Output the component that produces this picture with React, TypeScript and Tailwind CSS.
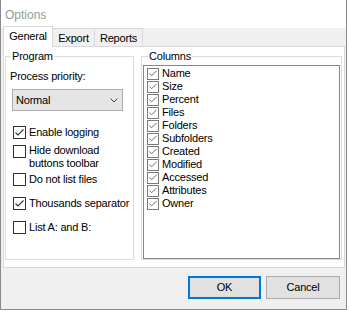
import { ReactNode } from 'react';

const columns = [
  'Name',
  'Size',
  'Percent',
  'Files',
  'Folders',
  'Subfolders',
  'Created',
  'Modified',
  'Accessed',
  'Attributes',
  'Owner',
];

function Tick({ color }: { color: string }) {
  return (
    <svg width="11" height="11" viewBox="0 0 11 11" className="block">
      <polyline points="1.5,5.5 4,8 9.5,2.5" fill="none" stroke={color} strokeWidth="1.1" />
    </svg>
  );
}

// checkbox of the dialog itself
function Check({ checked, children, top = 0 }: { checked: boolean; children: ReactNode; top?: number }) {
  return (
    <div className="flex items-start pl-[7px]" style={{ marginTop: top }}>
      <div className="mt-[1px] flex h-[13px] w-[13px] shrink-0 items-center justify-center border border-[#333333] bg-white">
        {checked && <Tick color="#333333" />}
      </div>
      <span className="ml-[3px] leading-[14px]">{children}</span>
    </div>
  );
}

export default function App() {
  return (
    <div
      className="h-[311px] w-[349px] overflow-hidden bg-white text-[11px] tracking-[-0.2px] text-black"
      style={{ fontFamily: '"Liberation Sans", Arial, sans-serif' }}
    >
      <div className="flex h-[310px] w-[347px] flex-col border-x border-b border-[#8a8a8a] bg-[#f0f0f0]">
        {/* Title bar */}
        <div className="flex h-[28px] shrink-0 items-start bg-white pl-[4px] pt-[6px] text-[12px] tracking-normal text-[#999999]">
          Options
        </div>

        {/* Tabs */}
        <div className="flex h-[18px] shrink-0 items-end pl-[2px]">
          <div className="relative z-10 mb-[-1px] flex h-[21px] w-[50px] items-center justify-center border border-b-0 border-[#d9d9d9] bg-white pb-[1px]">
            General
          </div>
          <div className="flex h-[18px] w-[42px] items-center justify-center border border-b-0 border-l-0 border-[#d9d9d9] pt-[1px]">
            Export
          </div>
          <div className="flex h-[18px] w-[48px] items-center justify-center border border-b-0 border-l-0 border-[#d9d9d9] pt-[1px]">
            Reports
          </div>
        </div>

        {/* Tab page */}
        <div className="ml-[2px] flex h-[222px] w-[342px] shrink-0 items-start border border-[#d9d9d9] bg-white pt-[2px]">
          <fieldset className="ml-[1px] h-[211px] w-[129px] border border-[#dcdcdc]">
            <legend className="ml-[5px] px-[1px] leading-[14px]">Program</legend>
            <div className="mt-[6px] pl-[4px] leading-[14px]">Process priority:</div>
            <div className="ml-[6px] mt-[6px] flex h-[22px] w-[111px] items-center justify-between border border-[#adadad] bg-[#e5e5e5] pl-[3px] pr-[4px]">
              <span>Normal</span>
              <svg width="8" height="5" viewBox="0 0 8 5" className="block">
                <polyline points="0.5,0.5 4,4 7.5,0.5" fill="none" stroke="#444444" strokeWidth="1" />
              </svg>
            </div>
            <Check checked top={14}>Enable logging</Check>
            <div className="flex items-start pl-[7px] pt-[5px]">
              <div className="mt-[1px] h-[13px] w-[13px] shrink-0 border border-[#333333] bg-white" />
              <span className="ml-[3px] leading-[13px]">
                Hide download
                <br />
                buttons toolbar
              </span>
            </div>
            <Check checked={false} top={2}>Do not list files</Check>
            <Check checked top={10}>Thousands separator</Check>
            <Check checked={false} top={10}>List A: and B:</Check>
          </fieldset>

          <fieldset className="ml-[7px] h-[211px] w-[201px] border border-[#dcdcdc]">
            <legend className="ml-[6px] px-[1px] leading-[14px]">Columns</legend>
            <div className="ml-[1px] mt-[2px] h-[194px] w-[197px] border border-[#828790] bg-white pl-[3px] pt-[1px]">
              {columns.map((c) => (
                <div key={c} className="flex h-[13px] items-center">
                  <div className="flex h-[12px] w-[12px] shrink-0 items-center justify-center border border-[#7a7a7a] bg-white">
                    <Tick color="#6a6a6a" />
                  </div>
                  <span className="ml-[3px] leading-[13px]">{c}</span>
                </div>
              ))}
            </div>
          </fieldset>
        </div>

        {/* Buttons */}
        <div className="flex flex-1 items-start justify-end pr-[6px] pt-[8px]">
          <button className="flex h-[23px] w-[73px] items-center justify-center border-2 border-[#0078d7] bg-[#e1e1e1]">
            OK
          </button>
          <button className="ml-[5px] flex h-[23px] w-[74px] items-center justify-center border border-[#adadad] bg-[#e1e1e1]">
            Cancel
          </button>
        </div>
      </div>
    </div>
  );
}
